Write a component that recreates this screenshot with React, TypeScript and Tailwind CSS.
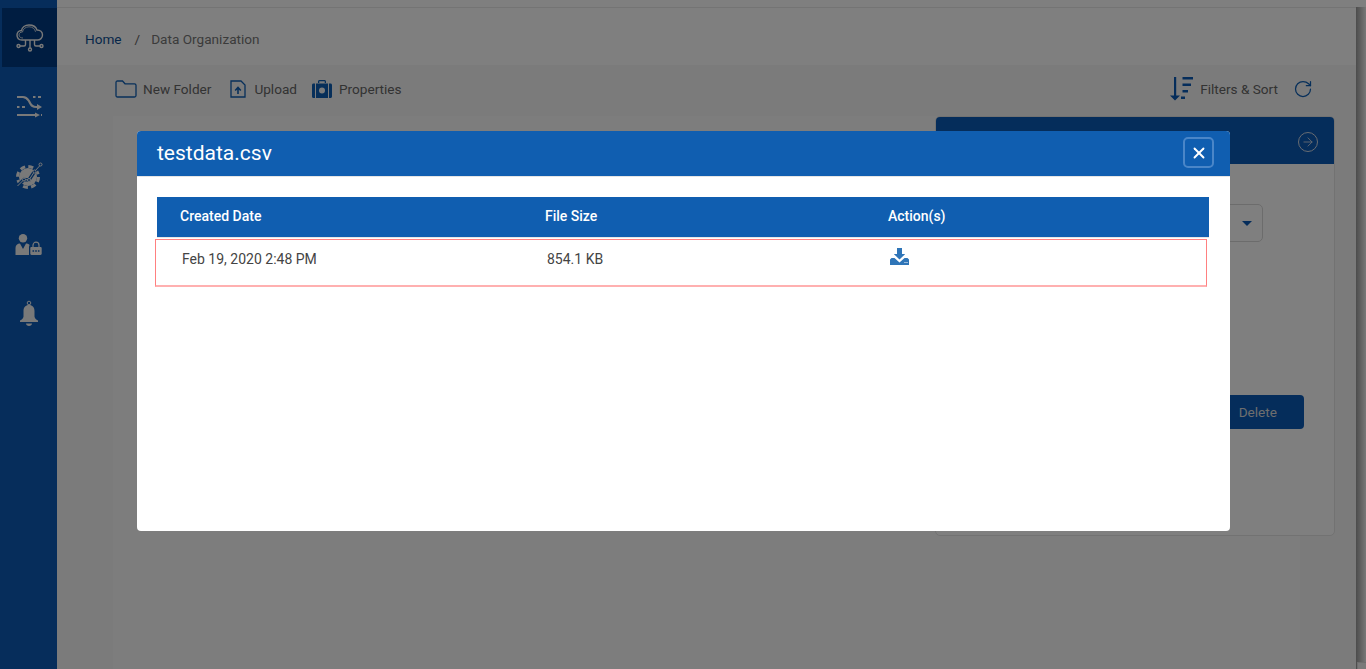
import { ArrowRight, RotateCw, X } from 'lucide-react';

function CloudNetIcon() {
    return (
        <svg width="28" height="28" viewBox="0 0 28 28" fill="none" stroke="currentColor" strokeWidth="1.400">
            <path d="M6 16C3 16 1 14 1 11c0-2.500 2-4.500 4.500-4.500C6 3.500 9 1 13 1c4 0 7 2 8 5 3 0 5.500 2 5.500 5s-2.500 5-5 5z" />
            <path d="M7 14c-2 0-4-1-4-3s1.500-3 3.500-3C7 5 9.500 2.800 13 2.800c3.500 0 6 2 6.500 5" strokeWidth="0.800" />
            <path d="M14 16v8M9.500 16v4.500c0 1-.6 1.500-1.500 1.500H4M18.500 16v4.500c0 1 .6 1.500 1.500 1.500h4" />
            <circle cx="2.500" cy="22" r="1.500" />
            <circle cx="25.500" cy="22" r="1.500" />
            <circle cx="14" cy="25.500" r="1.500" />
        </svg>
    );
}

function ShuffleIcon() {
    return (
        <svg width="26" height="26" viewBox="0 0 26 26" fill="currentColor" stroke="currentColor" strokeWidth="0">
            <path d="M1 3H7c3 0 4 1 6 4l1 2c1.500 3 3 4 6 4h2" fill="none" strokeWidth="2.200" />
            <path d="M21 10l5 3-5 3zM19 18.500l5 2.500-5 2.500z" />
            <path d="M17 3h2.500M22 3h3M1 13h2.500M6 13h3M1 21h19M25 21h1" fill="none" strokeWidth="2.200" />
        </svg>
    );
}

function GearChartIcon() {
    return (
        <svg width="28" height="28" viewBox="0 0 28 28" fill="none">
            <circle cx="13" cy="15" r="9" fill="currentColor" />
            <circle cx="13" cy="15" r="10.500" stroke="currentColor" strokeWidth="3" strokeDasharray="5 3.250" />
            <path d="M2.500 24l6.500-6.500 5 .5 5.500-8.500L25.500 3" stroke="#0b5ab6" strokeWidth="3.500" />
            <path d="M2.500 24l6.500-6.500 5 .5 5.500-8.500L25.500 3" stroke="currentColor" strokeWidth="1" />
            <circle cx="9" cy="17.500" r="1.500" fill="#0b5ab6" stroke="currentColor" />
            <circle cx="14" cy="18" r="1.500" fill="#0b5ab6" stroke="currentColor" />
            <circle cx="19.500" cy="9.500" r="1.500" fill="#0b5ab6" stroke="currentColor" />
            <circle cx="25.500" cy="2.500" r="1.500" fill="#0b5ab6" stroke="currentColor" />
        </svg>
    );
}

function UserLockIcon() {
    return (
        <svg width="27" height="21" viewBox="0 0 27 21" fill="currentColor">
            <circle cx="8" cy="4.200" r="4.200" />
            <path d="M0.500 21v-7c0-2.800 2-4.500 4.500-4.500l3 5.500 3-5.500c1.500 0 2.800.5 3.600 1.500-.4 1-.6 1.500-.6 3V21z" />
            <path d="M18 13v-1.800a3 3 0 0 1 6 0V13" fill="none" stroke="currentColor" strokeWidth="1.200" />
            <path fillRule="evenodd" d="M16.500 13h9c.7 0 1.200.5 1.200 1.200v5.600c0 .7-.5 1.200-1.200 1.200h-9c-.7 0-1.200-.5-1.200-1.200v-5.600c0-.7.5-1.200 1.200-1.200zM17.500 16.200v1.600h1.600v-1.600zm2.700 0v1.600h1.600v-1.600zm2.700 0v1.600h1.600v-1.600z" />
        </svg>
    );
}

function BellIcon() {
    return (
        <svg width="20" height="28" viewBox="0 0 20 28" fill="currentColor">
            <circle cx="10" cy="3" r="1.800" fill="none" stroke="currentColor" strokeWidth="1" />
            <path d="M10 5c3.500 0 5.500 2.500 5.500 6v5.500c0 1.500 1.500 3 3.500 4V22H1v-1.500c2-1 3.500-2.500 3.500-4V11C4.500 7.500 6.500 5 10 5z" />
            <path d="M7 23.500h6c0 1.500-1.300 2.500-3 2.500s-3-1-3-2.500z" />
        </svg>
    );
}

function FolderIcon() {
    return (
        <svg width="22" height="18" viewBox="0 0 22 18" fill="none" stroke="currentColor" strokeWidth="1.300">
            <path d="M1 15.500V2.500C1 1.500 1.500 1 2.500 1h5L10 3.800h9.500c1 0 1.500.5 1.500 1.500v10.200c0 .9-.6 1.500-1.500 1.500h-17C1.500 17 1 16.400 1 15.500z" />
        </svg>
    );
}

function UploadFileIcon() {
    return (
        <svg width="16" height="18" viewBox="0 0 16 18" fill="none" stroke="currentColor" strokeWidth="1.300">
            <path d="M1 1h10l4 4v12H1z" />
            <path d="M8 14V8M5.200 10.500 8 7.500l2.800 3" strokeWidth="1.600" />
        </svg>
    );
}

function CaseIcon() {
    return (
        <svg width="20" height="18" viewBox="0 0 20 18" fill="currentColor">
            <path fillRule="evenodd" d="M6 3V1.500C6 .7 6.700 0 7.500 0h5c.8 0 1.500.7 1.500 1.500V3h-1.300V1.300H7.300V3zM4 3.500h12V18H4zM10 7.500a3 3 0 1 0 0 6 3 3 0 0 0 0-6zM0 5c0-.9.6-1.500 1.500-1.500H3V18H1.500C.6 18 0 17.400 0 16.500zM17 3.500h1.500c.9 0 1.500.6 1.500 1.500v11.500c0 .9-.6 1.500-1.500 1.500H17z" />
        </svg>
    );
}

function SortIcon() {
    return (
        <svg width="23" height="24" viewBox="0 0 23 24" fill="currentColor">
            <path d="M4 0h2.200v18.500H10L5 23.500 0 18.500h4zM12.500 0H23v2.500H12.500zM12.500 6.500H21V9h-8.500zM12.500 13H18v2.500h-5.500zM11 19.500h4v2.500h-4z" />
        </svg>
    );
}

function DownloadIcon() {
    return (
        <svg width="19" height="17" viewBox="0 0 19 17" fill="currentColor">
            <path d="M7 0h5v6h3.200L9.500 11.500 3.800 6H7z" />
            <path fillRule="evenodd" d="M0 11.500 1.500 10H4.500l5 4.500 5-4.500h3L19 11.500V17H0zM14.500 14v1h1v-1zm2 0v1h1v-1z" />
        </svg>
    );
}

const navIcons = [<ShuffleIcon key="shuffle" />, <GearChartIcon key="gear" />, <UserLockIcon key="user" />, <BellIcon key="bell" />];

export default function App() {
    return (
        <div className="relative h-[669px] w-full overflow-hidden bg-white font-['Roboto',sans-serif] text-[13.6px] text-[#333]">
            <div className="flex h-full">
                {/* Sidebar */}
                <aside className="flex w-[57px] shrink-0 flex-col items-end bg-[#0c5ab6] pt-2 text-[#f2f2f2]">
                    <div className="flex h-[59px] w-[55px] items-center justify-center bg-[#003b82]">
                        <CloudNetIcon />
                    </div>
                    <nav className="flex w-full flex-col items-center gap-[42px] pt-[26px]">
                        {navIcons.map((icon) => (
                            <div key={icon.key} className="flex h-[27px] items-center justify-center">{icon}</div>
                        ))}
                    </nav>
                </aside>

                {/* Main */}
                <main className="mt-[7px] flex min-w-0 flex-1 flex-col border-t border-[#e8e8e8]">
                    <div className="flex h-[57px] shrink-0 items-center bg-white pl-[28px] pt-[5px]">
                        <span className="text-[#0f4f94]">Home</span>
                        <span className="ml-[13px] mr-[11px] text-[#666]">/</span>
                        <span className="text-[#777]">Data Organization</span>
                    </div>
                    <div className="flex flex-1 flex-col bg-[#f7f7f7] pl-[56px]">
                        <div className="flex h-[51px] shrink-0 items-center justify-between pb-[3px] pl-[2px] pr-[43px]">
                            <div className="flex items-center text-[#666]">
                                <span className="flex items-center gap-[6px] text-[#0f5fb4]"><FolderIcon /><span className="text-[#666]">New Folder</span></span>
                                <span className="ml-[19px] flex items-center gap-[8px] text-[#0f5fb4]"><UploadFileIcon /><span className="text-[#666]">Upload</span></span>
                                <span className="ml-[15px] flex items-center gap-[7px] text-[#0f5fb4]"><CaseIcon /><span className="text-[#666]">Properties</span></span>
                            </div>
                            <div className="flex items-center text-[#666]">
                                <span className="text-[#0b5ab6]"><SortIcon /></span>
                                <span className="ml-[7px]">Filters &amp; Sort</span>
                                <RotateCw className="ml-[15px] h-5 w-5 text-[#0f5fb4]" strokeWidth={1.5} />
                            </div>
                        </div>
                        <div className="relative flex-1">
                            <div className="mr-[56px] h-full bg-[#fbfbfb]" />
                            {/* Side panel, mostly covered by dialog */}
                            <div className="absolute right-[21px] top-0 h-[420px] w-[400px] overflow-hidden rounded-[5px] border border-[#e4e4e4] bg-white">
                                <div className="flex h-[47px] items-center justify-end bg-[#0b5ab6] pr-[16px] pt-[2px] text-[#d0d8e4]">
                                    <span className="flex h-5 w-5 items-center justify-center rounded-full border border-current">
                                        <ArrowRight className="h-3.5 w-3.5" strokeWidth={1.5} />
                                    </span>
                                </div>
                                <div className="flex flex-col items-end">
                                    <div className="mr-[71px] mt-[40px] flex h-[38px] w-[120px] items-center justify-end rounded-[5px] border border-[#d8d8d8] pr-[10px]">
                                        <span className="h-0 w-0 border-x-[5px] border-t-[5px] border-x-transparent border-t-[#0b5ab6]" />
                                    </div>
                                    <button className="mr-[30px] mt-[153px] flex h-[34px] w-[120px] items-center justify-end rounded-[4px] bg-[#0b5ab6] pr-[27px] text-[#ddd]">
                                        Delete
                                    </button>
                                </div>
                            </div>
                        </div>
                    </div>
                </main>

                {/* Scrollbar */}
                <div className="mt-[7px] flex w-[10px] shrink-0 flex-col justify-end bg-gradient-to-r from-[#999] to-[#f0f0f0]">
                    <div className="ml-px h-[7px] border-t border-l border-[#ddd] bg-[#f4f4f4]" />
                </div>
            </div>

            {/* Backdrop */}
            <div className="absolute inset-0 bg-black/50" />

            {/* Dialog */}
            <div className="absolute left-[137px] top-[131px] h-[400px] w-[1093px] overflow-hidden rounded-[4px] bg-white text-[14px]">
                <div className="flex h-[46px] items-center justify-between border-b border-[#e5e5e5] bg-[#105eb0] pl-[20px] pr-[16px] text-white">
                    <h2 className="text-[21px] font-normal">testdata.csv</h2>
                    <button className="-mt-[2px] flex h-[31px] w-[31px] items-center justify-center rounded-[5px] border-2 border-[#4a86c8]">
                        <X className="h-[18px] w-[18px]" strokeWidth={2.500} />
                    </button>
                </div>
                <div className="px-[20px] pt-[20px]">
                    <div className="flex h-[41px] w-[1052px] items-center border-b border-[#e5e5e5] bg-[#105eb0] pb-[2px] font-medium text-white">
                        <span className="w-[388px] pl-[23px]">Created Date</span>
                        <span className="w-[343px]">File Size</span>
                        <span>Action(s)</span>
                    </div>
                    <div className="-ml-[2px] mt-[1px] flex h-[48px] w-[1052px] items-start border border-[#ff8080] border-b-2 border-b-[#ffb0b0] pt-[9px] text-[#444]">
                        <span className="w-[391px] pl-[26px]">Feb 19, 2020 2:48 PM</span>
                        <span className="w-[343px]">854.1 KB</span>
                        <span className="-mt-[1px] text-[#2f75b8]"><DownloadIcon /></span>
                    </div>
                </div>
            </div>
        </div>
    );
}
